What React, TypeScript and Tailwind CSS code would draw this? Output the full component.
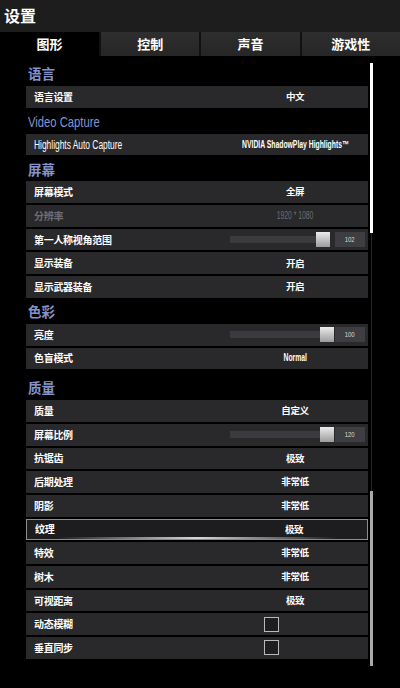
import React from "react"

type Row =
  | { label: string; kind: "text"; value: string; disabled?: boolean; latin?: boolean; selected?: boolean }
  | { label: string; kind: "slider"; value: number; thumb: number }
  | { label: string; kind: "check" }

interface Section {
  title: string
  latin?: boolean
  extraTop?: boolean
  rows: Row[]
}

const cjk = { fontFamily: '"Noto Sans CJK SC", "Noto Sans", sans-serif' }
const latin = { fontFamily: '"Liberation Sans", Arial, sans-serif' }

const sections: Section[] = [
  { title: "语言", rows: [{ label: "语言设置", kind: "text", value: "中文" }] },
  {
    title: "Video Capture",
    latin: true,
    rows: [{ label: "Highlights Auto Capture", kind: "text", value: "NVIDIA ShadowPlay Highlights™", latin: true }],
  },
  {
    title: "屏幕",
    rows: [
      { label: "屏幕模式", kind: "text", value: "全屏" },
      { label: "分辨率", kind: "text", value: "1920 * 1080", disabled: true, latin: true },
      { label: "第一人称视角范围", kind: "slider", value: 102, thumb: 86 },
      { label: "显示装备", kind: "text", value: "开启" },
      { label: "显示武器装备", kind: "text", value: "开启" },
    ],
  },
  {
    title: "色彩",
    rows: [
      { label: "亮度", kind: "slider", value: 100, thumb: 90 },
      { label: "色盲模式", kind: "text", value: "Normal", latin: true },
    ],
  },
  {
    title: "质量",
    extraTop: true,
    rows: [
      { label: "质量", kind: "text", value: "自定义" },
      { label: "屏幕比例", kind: "slider", value: 120, thumb: 90 },
      { label: "抗锯齿", kind: "text", value: "极致" },
      { label: "后期处理", kind: "text", value: "非常低" },
      { label: "阴影", kind: "text", value: "非常低" },
      { label: "纹理", kind: "text", value: "极致", selected: true },
      { label: "特效", kind: "text", value: "非常低" },
      { label: "树木", kind: "text", value: "非常低" },
      { label: "可视距离", kind: "text", value: "极致" },
      { label: "动态模糊", kind: "check" },
      { label: "垂直同步", kind: "check" },
    ],
  },
]

const tabs = ["图形", "控制", "声音", "游戏性"]

function SettingRow({ row }: { row: Row }) {
  const selected = row.kind === "text" && row.selected
  const disabled = row.kind === "text" && row.disabled
  const labelLatin = row.label.startsWith("Highlights")

  return (
    <div
      className={`relative mb-[2px] flex h-[21.7px] items-center overflow-hidden leading-none ${
        selected ? "border border-[#8c8c8c] bg-[#1d1c1f]" : "bg-[#29282b]"
      }`}
    >
      {selected && (
        <div className="absolute bottom-0 left-[30px] right-[30px] h-[2px] bg-gradient-to-r from-transparent via-[#d8d8d8] to-transparent" />
      )}
      <div
        className={`flex flex-1 items-center pl-[8px] font-bold ${disabled ? "text-[#6f6f72]" : "text-white"}`}
        style={labelLatin ? latin : cjk}
      >
        {labelLatin ? (
          <span className="inline-block origin-left scale-x-[0.7] whitespace-nowrap text-[12px] font-normal">
            {row.label}
          </span>
        ) : (
          <span className="text-[10px] tracking-[-0.3px]">{row.label}</span>
        )}
      </div>

      {row.kind === "text" && (
        <div
          className={`flex w-[146px] shrink-0 items-center justify-center font-bold ${
            disabled ? "text-[#6f6f72]" : "text-white"
          }`}
          style={row.latin ? latin : cjk}
        >
          {row.latin ? (
            <span
              className={`inline-block scale-x-[0.68] whitespace-nowrap text-[10px] ${disabled ? "font-normal" : ""}`}
            >
              {row.value}
            </span>
          ) : (
            <span className="text-[9.5px] tracking-[-0.4px]">{row.value}</span>
          )}
        </div>
      )}

      {row.kind === "slider" && (
        <div className="mr-[3px] flex w-[135px] shrink-0 items-center">
          <div className="relative h-[15px] w-[100px]">
            <div className="absolute left-0 right-0 top-[4px] h-[7px] bg-[#3b3a3e]" />
            <div
              className="absolute top-0 h-[15px] w-[14px] bg-gradient-to-b from-[#ececec] to-[#9c9c9c]"
              style={{ left: row.thumb }}
            />
          </div>
          <div
            className="ml-[5px] flex h-[15px] w-[30px] items-center justify-center bg-[#3e3d41] text-[#d8d8d8]"
            style={latin}
          >
            <span className="inline-block scale-x-[0.75] text-[8px]">{row.value}</span>
          </div>
        </div>
      )}

      {row.kind === "check" && (
        <div className="flex w-[146px] shrink-0 pl-[42px]">
          <div className="h-[15px] w-[15px] border-[1.5px] border-[#b9b9b9] bg-[#1e1e20]" />
        </div>
      )}
    </div>
  )
}

export default function App() {
  return (
    <div className="h-[688px] w-[400px] overflow-hidden bg-black">
      {/* Title bar */}
      <div className="flex h-[32px] items-center bg-[#1d1d1d] pb-[3px] pl-[4px]">
        <span className="text-[16px] font-bold text-white" style={cjk}>
          设置
        </span>
      </div>

      {/* Tabs */}
      <div className="flex h-[24px] bg-[#111]">
        {tabs.map((t, i) => (
          <div
            key={t}
            className={`flex items-center justify-center text-[13px] font-bold text-white ${
              i === 0 ? "w-[99px] bg-black" : "ml-[2px] flex-1 bg-gradient-to-b from-[#2e2e2e] to-[#262626]"
            }`}
            style={cjk}
          >
            {t}
          </div>
        ))}
      </div>

      {/* Content */}
      <div className="flex pt-[6px]">
        <div className="ml-[26px] w-[342px]">
          {sections.map((s) => (
            <div key={s.title} className={s.extraTop ? "mt-[7px]" : ""}>
              <div
                className="flex h-[24px] items-center pl-[2px] leading-none text-[#8593cc]"
                style={s.latin ? latin : cjk}
              >
                {s.latin ? (
                  <span className="inline-block origin-left scale-x-[0.75] whitespace-nowrap text-[15px]">
                    {s.title}
                  </span>
                ) : (
                  <span className="text-[13.5px] font-bold">{s.title}</span>
                )}
              </div>
              {s.rows.map((r) => (
                <SettingRow key={r.label} row={r} />
              ))}
            </div>
          ))}
        </div>

        {/* Scrollbar */}
        <div className="ml-[2px] flex w-[3px] flex-col items-center pt-[1px]">
          <div className="h-[170px] w-[3px] bg-white" />
          <div className="h-[258px] w-[1px] bg-[#262626]" />
          <div className="h-[175px] w-[3px] bg-[#a9a9a9]" />
        </div>
      </div>
    </div>
  )
}
